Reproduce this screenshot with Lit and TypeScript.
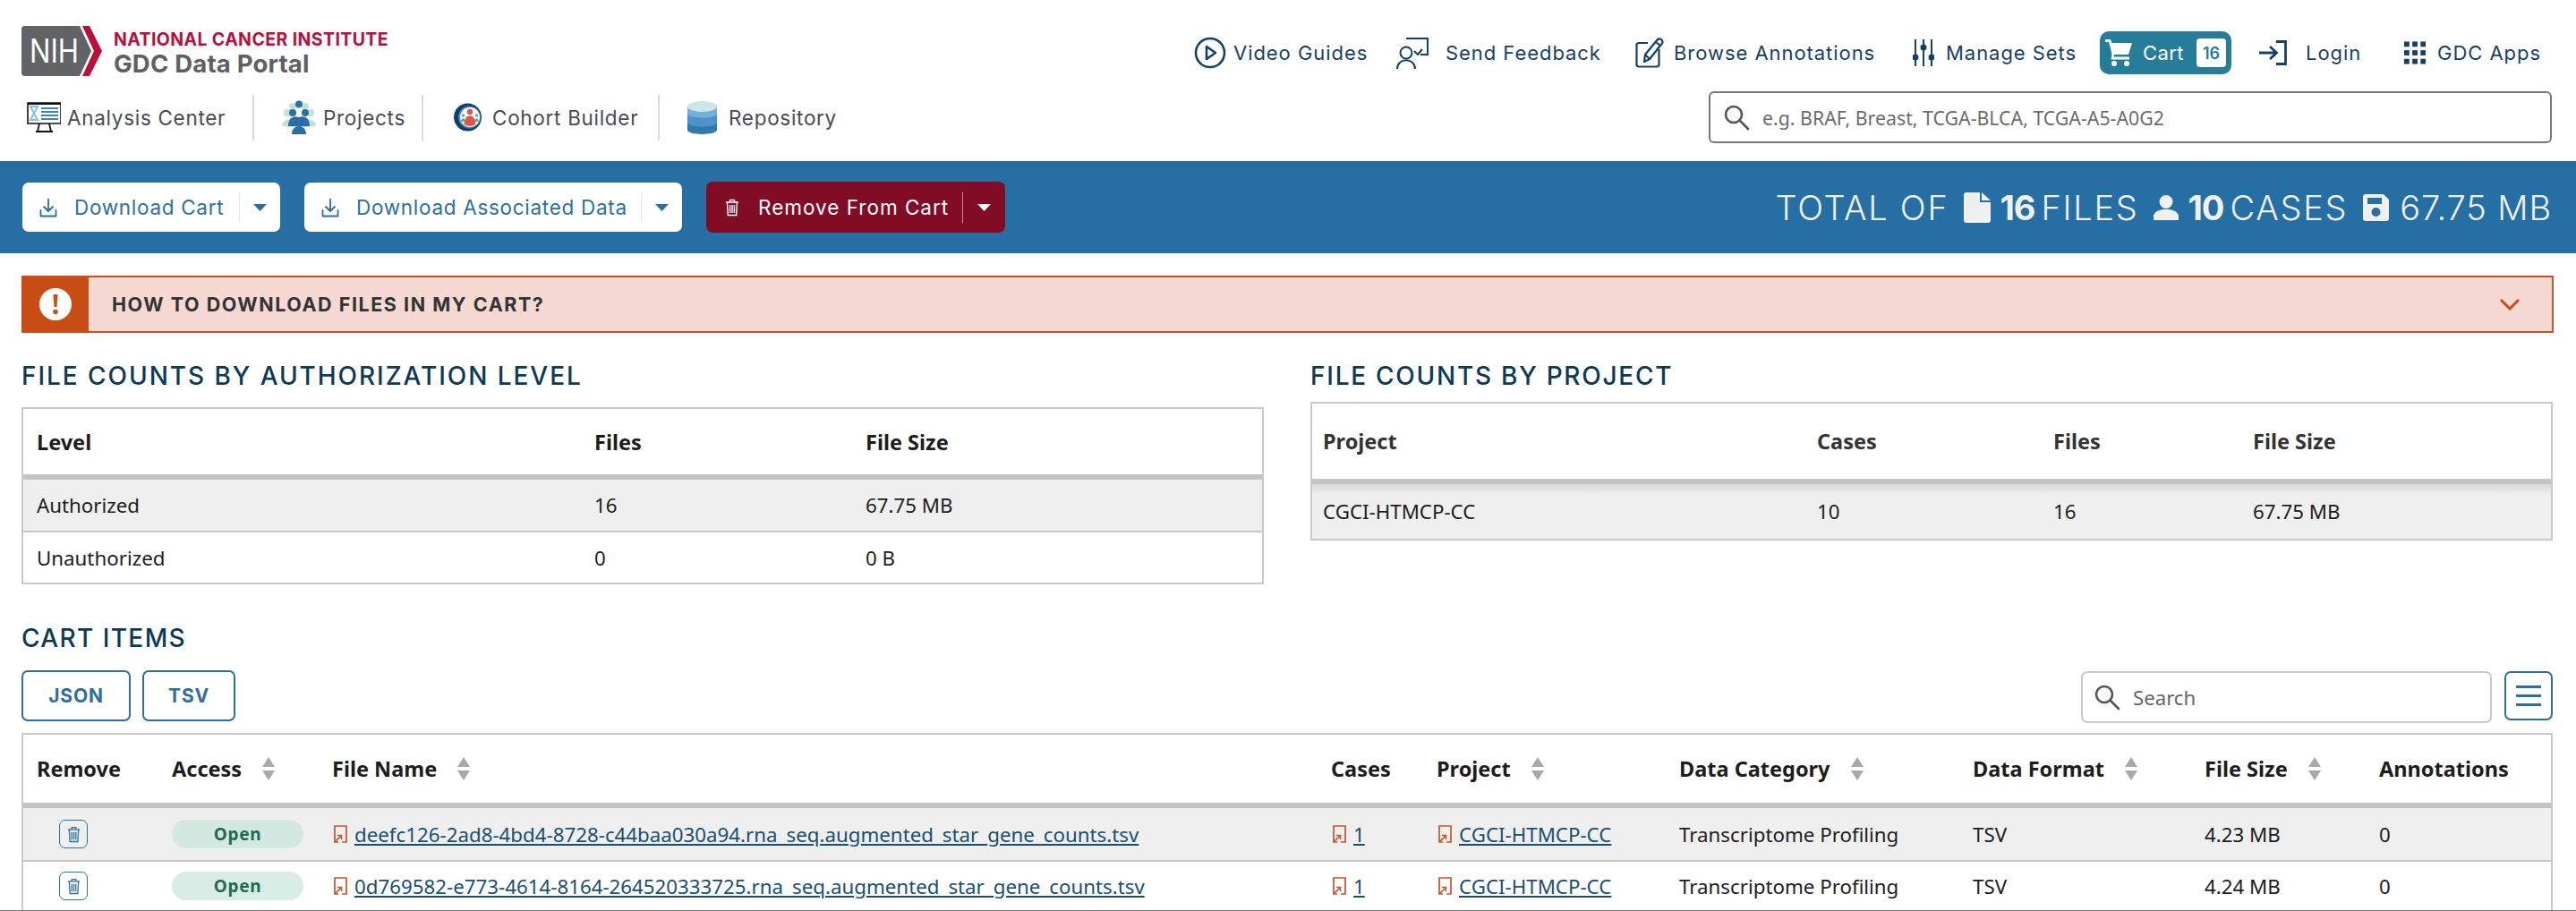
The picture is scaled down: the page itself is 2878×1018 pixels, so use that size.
// app.ts - GDC cart page
import { html, css, svg, LitElement } from 'lit';
import { customElement } from 'lit/decorators.js';

const sortIcon = html`<svg class="sort" viewBox="0 0 16 26" width="16" height="26">
  <path d="M8 0 L15 11 H1 Z M8 26 L1 15 H15 Z" fill="#a9a9a9"></path></svg>`;

const linkIcon = html`<svg class="link-icon" viewBox="0 0 15 20" width="15" height="20" fill="none" stroke="#c9542a" stroke-width="1.7">
  <path d="M5 19 H1 V1 H14 V19 H9"></path><path d="M1 19 L8 12 M4 11.5 H8.5 V16" stroke-width="1.6"></path></svg>`;

const trashIcon = (stroke: string, w = 16, h = 20) => html`<svg viewBox="0 0 16 20" width=${w} height=${h} fill="none" stroke=${stroke} stroke-width="1.4">
  <path d="M1 4 H15 M5.5 4 V1.5 H10.5 V4 M2.5 4 L3.3 18.5 H12.7 L13.5 4 M5.6 7 V16 M8 7 V16 M10.4 7 V16"></path></svg>`;

const downloadIcon = html`<svg viewBox="0 0 20 22" width="20" height="22" fill="none" stroke="#2e6f9f" stroke-width="1.8" stroke-linecap="round" stroke-linejoin="round">
  <path d="M1.5 14 V20.5 H18.5 V14 M10 1.5 V14.5 M5 10 L10 15 L15 10"></path></svg>`;

const caret = (fill: string) => html`<svg viewBox="0 0 15 8" width="15" height="8"><path d="M0 0 H15 L7.5 8 Z" fill=${fill}></path></svg>`;

const searchIcon = html`<svg viewBox="0 0 30 30" width="30" height="30" fill="none" stroke="#555" stroke-width="2.6" stroke-linecap="round">
  <circle cx="12" cy="12" r="9"></circle><path d="M19 19 L28 28"></path></svg>`;

// utility nav icons, all navy outline
const navy = '#164166';
const videoIcon = html`<svg viewBox="0 0 36 36" width="36" height="36" fill="none" stroke=${navy} stroke-width="2.6">
  <circle cx="18" cy="18" r="16"></circle><path d="M14 11 L24 18 L14 25 Z" stroke-linejoin="round"></path></svg>`;
const feedbackIcon = html`<svg viewBox="0 0 36 35" width="36" height="35" fill="none" stroke=${navy} stroke-width="2">
  <circle cx="11" cy="17" r="6.5"></circle><path d="M1 35 C1 22 21 22 21 35 M11 1 H35 V19 H27 M20 15 L24 19 L29 13"></path></svg>`;
const editIcon = html`<svg viewBox="0 0 32 34" width="32" height="34" fill="none" stroke=${navy} stroke-width="2.2" stroke-linejoin="round">
  <path d="M14 6 H4 Q1.500 6 1.500 8.500 V30 Q1.500 32.500 4 32.500 H24 Q26.500 32.500 26.500 30 V13"></path>
  <path d="M10 27 L11 19 L25 2 Q27 0.500 29.500 2.500 Q31.500 5 29.500 7 L16 24 Z M11 19 L16 24 M23 5 L28 9"></path></svg>`;
const setsIcon = html`<svg viewBox="0 0 24 30" width="24" height="30" fill=${navy} stroke=${navy} stroke-width="2">
  <path d="M3 0 V30 M12 0 V30 M21 0 V30"></path><circle cx="3" cy="20" r="2.5"></circle><circle cx="12" cy="9" r="2.500"></circle><circle cx="21" cy="20" r="2.500"></circle></svg>`;
const cartIcon = html`<svg viewBox="0 0 30 30" width="30" height="30" fill="#fff">
  <path d="M0 0 H6 L7.500 4 H30 L26 17 H10 L9.500 19.500 H27 V22.500 H6.500 L7.500 16 L4 3 H0 Z"></path><circle cx="10" cy="27" r="3"></circle><circle cx="24" cy="27" r="3"></circle></svg>`;
const loginIcon = html`<svg viewBox="0 0 32 28" width="32" height="28" fill="none" stroke=${navy} stroke-width="2.8">
  <path d="M19 1.500 H29.500 V26.500 H19 M0 14 H19 M12 7 L19.500 14 L12 21"></path></svg>`;
const appsIcon = html`<svg viewBox="0 0 25 26" width="25" height="26" fill=${navy}>
  ${[0, 9.5, 19].map((x) => [0, 10, 20].map((y) => svg`<rect x=${x} y=${y} width="6" height="6"></rect>`))}</svg>`;

// big nav pictograms
const analysisIcon = html`<svg viewBox="0 0 38 34" width="38" height="34">
  <path d="M1 1 H38 V24 H1 Z" fill="#fff" stroke="#111" stroke-width="1.6"></path><path d="M1 2 H38" stroke="#111" stroke-width="2"></path>
  <path d="M4 5 H12 L4 20 H12 Z M12 5 L4 20" fill="none" stroke="#86c0df" stroke-width="2"></path>
  <path d="M16 7 H35 M16 11 H35 M16 15 H35 M16 19 H35" stroke="#3f83b5" stroke-width="2"></path>
  <path d="M14 24 L12 33 H27 L25 24 M10 33 H29" fill="none" stroke="#111" stroke-width="1.8"></path></svg>`;
const projectsIcon = html`<svg viewBox="0 0 38 38" width="38" height="38">
  <g fill="#bfe3da"><circle cx="6" cy="14" r="4"></circle><circle cx="32" cy="14" r="4"></circle><circle cx="12" cy="7" r="4"></circle><circle cx="26" cy="7" r="4"></circle><path d="M0 28 C0 17 38 17 38 28 C38 31 0 31 0 28 Z"></path></g>
  <g fill="#2b6ea4"><circle cx="19" cy="4.500" r="4"></circle><circle cx="12" cy="14" r="4"></circle><circle cx="26" cy="14" r="4"></circle><path d="M7 29 C7 17 17 17 19 20 C21 17 31 17 31 29 Z"></path><circle cx="19" cy="23" r="4"></circle><path d="M11 38 C11 26 27 26 27 38 Z"></path></g></svg>`;
const cohortIcon = html`<svg viewBox="0 0 31 32" width="31" height="32">
  <circle cx="15.500" cy="16" r="15.500" fill="#123f63"></circle><circle cx="17.500" cy="16" r="12.500" fill="#3f8fc0"></circle><circle cx="18" cy="16" r="11" fill="#fff"></circle>
  <circle cx="10.500" cy="14" r="1.800" fill="#5fb39a"></circle><circle cx="25.500" cy="14" r="1.800" fill="#5fb39a"></circle><path d="M8 21 C8 16 13 16 13 21 Z M23 21 C23 16 28 16 28 21 Z" fill="#5fb39a"></path>
  <circle cx="18" cy="10" r="3.200" fill="#e2574c"></circle><path d="M11.500 24 C11.500 11 24.500 11 24.500 24 Q18 28 11.500 24 Z" fill="#e2574c"></path></svg>`;
const repoIcon = html`<svg viewBox="0 0 33 37" width="33" height="37">
  <path d="M0 5 H33 V32 C33 38.500 0 38.500 0 32 Z" fill="#2f78b0"></path>
  <path d="M0 5 H33 V24 C33 30 0 30 0 24 Z" fill="#4d93c8"></path>
  <path d="M0 5 H33 V14 C33 20 0 20 0 14 Z" fill="#72afdd"></path>
  <ellipse cx="16.500" cy="6" rx="16.500" ry="6" fill="#cfe6e6"></ellipse></svg>`;

const fileIcon = html`<svg viewBox="0 0 30 34" width="30" height="34" fill="#f0f0f0"><path d="M3 0 H18 V11 H30 V31 Q30 34 27 34 H3 Q0 34 0 31 V3 Q0 0 3 0 Z M20 0 L30 9 H20 Z"></path></svg>`;
const personIcon = html`<svg viewBox="0 0 28 28" width="28" height="28" fill="#f0f0f0"><circle cx="14" cy="7.500" r="7.500"></circle><path d="M0 28 V24 C0 13 28 13 28 24 V28 Z"></path></svg>`;
const saveIcon = html`<svg viewBox="0 0 29 30" width="29" height="30"><path fill="#f0f0f0" fill-rule="evenodd" d="M3 0 H23 L29 6 V27 Q29 30 26 30 H3 Q0 30 0 27 V3 Q0 0 3 0 Z M5 4 V11 H21 V4 Z M14.500 15 A5 5 0 1 0 14.500 25 A5 5 0 1 0 14.500 15 Z"></path></svg>`;

const cartRows = [
  ['deefc126-2ad8-4bd4-8728-c44baa030a94.rna_seq.augmented_star_gene_counts.tsv', '4.23 MB'],
  ['0d769582-e773-4614-8164-264520333725.rna_seq.augmented_star_gene_counts.tsv', '4.24 MB'],
];

@customElement('app-root')
export class AppRoot extends LitElement {
  static styles = css`
    :host {
      display: block;
      font-family: "Noto Sans", sans-serif;
      color: #1d1d1d;
    }
    * { box-sizing: border-box; }
    .page {
      display: flex;
      flex-direction: column;
      height: 1018px;
      overflow: hidden;
      background: #fff;
    }

    /* header */
    .top { height: 180px; flex: none; padding: 29px 27px 0 24px; }
    .brand-row { display: flex; justify-content: space-between; height: 56px; padding-right: 12px; }
    .logo { display: flex; gap: 13px; }
    .logo-text { display: flex; flex-direction: column; font-family: Inter, sans-serif; font-weight: 700; }
    .nci { font-size: 19.5px; line-height: 24px; margin-top: 3px; color: #b8103a; letter-spacing: 0.4px; white-space: nowrap; }
    .gdc { font-size: 27.5px; line-height: 31px; color: #5f6062; letter-spacing: 0.2px; white-space: nowrap; }
    .util {
      display: grid;
      grid-template-columns: 226px 267px 310px 209px 178px 162px 153px;
      height: 48px;
      margin-top: 6px;
      font-family: Inter, sans-serif;
      font-size: 22px;
      color: #164166;
    }
    .util-item { display: flex; align-items: center; white-space: nowrap; letter-spacing: 0.95px; }
    .g8 { gap: 8px; } .g11 { gap: 11px; } .g13 { gap: 13px; } .g19 { gap: 19px; } .g20 { gap: 20px; }
    .cart-btn {
      display: flex; align-items: center;
      width: 147px; height: 48px;
      padding: 0 6px;
      background: #267d99;
      border-radius: 10px;
      color: #fff;
      gap: 12px;
      letter-spacing: 0.4px;
    }
    .badge {
      display: flex; align-items: center; justify-content: center;
      width: 33px; height: 32px;
      margin-left: auto;
      background: #fff;
      border-radius: 4px;
      color: #267d99;
      font-size: 18px;
      font-weight: 600;
      letter-spacing: 0;
    }
    .nav-row { display: flex; justify-content: space-between; align-items: center; height: 58px; margin-top: 17px; }
    .nav {
      display: grid;
      grid-template-columns: 254px 189px 264px auto;
      height: 51px;
      margin-left: 6px;
      font-family: Inter, sans-serif;
      font-size: 22.5px;
      color: #484b53;
      letter-spacing: 0.7px;
    }
    .nav-item { display: flex; align-items: center; white-space: nowrap; border-right: 2px solid #d9d9d9; }
    .nav-item:last-child { border-right: 0; }
    .nav-item.a { gap: 7px; }
    .nav-item.b { gap: 8px; padding-left: 31px; }
    .nav-item.c { gap: 12px; padding-left: 34px; }
    .nav-item.d { gap: 13px; padding-left: 31px; }
    .global-search {
      display: flex; align-items: center;
      width: 942px; height: 58px;
      padding-left: 14px;
      gap: 14px;
      border: 2px solid #777;
      border-radius: 6px;
      color: #6c6c6c;
      font-size: 21.3px;
    }

    /* blue band */
    .band {
      flex: none;
      display: flex; align-items: center;
      height: 103px;
      padding: 0 27px 0 25px;
      gap: 27px;
      background: linear-gradient(#2a6a9c, #266fa5 24px);
    }
    .btn {
      display: flex; align-items: center;
      height: 55px;
      padding-left: 19px;
      background: #fff;
      border-radius: 7px;
      font-family: Inter, sans-serif;
      font-size: 22.5px;
      letter-spacing: 0.7px;
      color: #2e6f9f;
      white-space: nowrap;
    }
    .btn .label { margin-left: 19px; }
    .btn .split {
      display: flex; align-items: center; justify-content: center;
      height: 34px;
      margin-left: auto;
      border-left: 1px solid #e6e6e6;
    }
    .btn-cart { width: 288px; }
    .btn-assoc { width: 422px; }
    .btn-cart .split, .btn-assoc .split { width: 46px; }
    .btn-remove { width: 334px; height: 57px; padding-left: 21px; background: #820b26; color: #fff; letter-spacing: 1px; }
    .btn-remove .label { margin-left: 21px; }
    .btn-remove .split { width: 48px; border-left-color: #c9899a; }
    .totals {
      display: flex; align-items: center;
      margin-left: auto;
      font-family: Inter, sans-serif;
      font-size: 38px;
      font-weight: 300;
      letter-spacing: 1.7px;
      color: #f0f0f0;
      white-space: nowrap;
    }
    .totals b { font-weight: 700; margin-left: 10px; margin-right: 7px; letter-spacing: -1px; }
    .totals svg { margin-left: 17px; }
    .totals .size { margin-left: 12px; letter-spacing: 0.9px; }

    /* main */
    main { flex: 1; min-height: 0; overflow: hidden; padding: 25px 26px 0 24px; }
    .alert {
      display: flex; align-items: center;
      height: 64px;
      margin-right: -1px;
      border: 2px solid #c0552a;
      border-left: 0;
      background: #f6d9d3;
    }
    .alert-flag {
      display: flex; align-items: center; justify-content: center;
      align-self: stretch;
      width: 75px;
      margin: -2px 0;
      background: #c84e16;
    }
    .alert-title { margin-left: 26px; font-family: Inter, sans-serif; font-weight: 700; font-size: 21.5px; color: #333; letter-spacing: 1.55px; }
    .alert-chevron { margin-left: auto; margin-right: 36px; }
    h2 {
      margin: 0;
      font-family: Inter, sans-serif;
      font-size: 28px;
      line-height: 34px;
      font-weight: 500;
      letter-spacing: 1.75px;
      color: #0d3a56;
      white-space: nowrap;
    }
    .h-wide { letter-spacing: 1.95px; }
    .summary { display: grid; grid-template-columns: 1388px 1388px; gap: 52px; margin-top: 31px; }
    .mt18 { margin-top: 18px; }
    .mt12 { margin-top: 12px; }
    table {
      width: 100%;
      table-layout: fixed;
      border-collapse: separate;
      border-spacing: 0;
      border: 2px solid #c9c9c9;
      font-size: 22.3px;
    }
    th { padding: 0; text-align: left; font-size: 23.5px; font-weight: 700; border-bottom: 6px solid #c4c4c4; white-space: nowrap; }
    td { padding: 0; white-space: nowrap; }
    .first { padding-left: 15px; }
    tbody tr:nth-child(odd) { background: #efefef; }
    tbody tr + tr td { border-top: 2px solid #c9c9c9; }
    .t-auth thead tr { height: 79px; }
    .t-auth tbody tr:first-child { height: 57px; }
    .t-auth tbody tr:last-child { height: 58px; }
    .t-auth .c1 { width: 638px; } .t-auth .c2 { width: 303px; }
    .t-proj thead tr { height: 90px; }
    .t-proj thead th { color: #333; }
    .t-proj tbody tr { height: 61px; }
    .t-proj tbody td { background: linear-gradient(#d9d9d9, #efefef 12px); }
    .t-proj .c1 { width: 564px; } .t-proj .c2 { width: 264px; } .t-proj .c3 { width: 223px; }
    .t-proj .first { padding-left: 12px; }

    .cart-heading { margin-top: 43px; letter-spacing: 1.4px; }
    .toolbar { display: flex; align-items: flex-start; margin-top: 19px; }
    .tool-btn {
      display: flex; align-items: center; justify-content: center;
      height: 57px;
      border: 2px solid #2e6f9f;
      border-radius: 7px;
      font-family: Inter, sans-serif;
      font-weight: 700;
      font-size: 21px;
      letter-spacing: 0.8px;
      color: #2e6f9f;
    }
    .json { width: 122px; margin-right: 13px; }
    .tsv { width: 104px; }
    .table-search {
      display: flex; align-items: center;
      width: 459px; height: 58px;
      margin: 1px 0 0 auto;
      padding-left: 12px;
      gap: 14px;
      border: 2px solid #c9c9c9;
      border-radius: 7px;
      color: #666;
      font-size: 22.2px;
    }
    .menu-btn {
      display: flex; align-items: center; justify-content: center;
      width: 54px; height: 55px;
      margin: 1px 0 0 14px;
      border: 2px solid #2e6f9f;
      border-radius: 7px;
    }
    .t-cart { margin-top: 11px; border-bottom: 0; }
    .t-cart thead tr { height: 82px; }
    .t-cart tbody tr:first-child { height: 58px; }
    .t-cart tbody tr:last-child { height: 56px; }
    .c-remove { width: 166px; } .c-access { width: 179px; } .c-file { width: 1116px; }
    .c-cases { width: 118px; } .c-project { width: 271px; } .c-cat { width: 328px; }
    .c-format { width: 259px; } .c-size { width: 195px; }
    .th-sort { display: flex; align-items: center; gap: 22px; }
    .trash {
      display: flex; align-items: center; justify-content: center;
      width: 32px; height: 32px;
      margin-left: 40px;
      border: 1.5px solid #2e6f9f;
      border-radius: 7px;
    }
    .pill {
      display: flex; align-items: center; justify-content: center;
      width: 147px; height: 32px;
      border-radius: 16px;
      background: #d3e9e0;
      color: #1f6a55;
      font-size: 19px;
      font-weight: 700;
      letter-spacing: 0.7px;
    }
    tbody tr:last-child .pill { background: #d8ede5; }
    .linked { display: flex; align-items: center; gap: 8px; }
    a { color: #1a4f73; text-decoration: underline; }
    .link-icon { flex: none; margin-left: 2px; }
    .edge { flex: none; height: 1px; background: #777; }
  `;

  render() {
    return html`
      <div class="page">
        <header class="top">
          <div class="brand-row">
            <div class="logo">
              <svg viewBox="0 0 90 56" width="90" height="56">
                <path d="M4 0 H65 L78 28 L65 56 H4 Q0 56 0 52 V4 Q0 0 4 0 Z" fill="#626366"></path>
                <path d="M68 0 H76 L90 28 L76 56 H68 L81 28 Z" fill="#b8103a"></path>
                <text x="9" y="41" font-family="Inter, sans-serif" font-size="37" fill="#fff" textLength="55" lengthAdjust="spacingAndGlyphs">NIH</text>
              </svg>
              <div class="logo-text">
                <span class="nci">NATIONAL CANCER INSTITUTE</span>
                <span class="gdc">GDC Data Portal</span>
              </div>
            </div>
            <nav class="util">
              <div class="util-item g8">${videoIcon}Video Guides</div>
              <div class="util-item g19">${feedbackIcon}Send Feedback</div>
              <div class="util-item g11">${editIcon}Browse Annotations</div>
              <div class="util-item g13">${setsIcon}Manage Sets</div>
              <div class="util-item"><div class="cart-btn">${cartIcon}Cart<span class="badge">16</span></div></div>
              <div class="util-item g20">${loginIcon}Login</div>
              <div class="util-item g13">${appsIcon}GDC Apps</div>
            </nav>
          </div>
          <div class="nav-row">
            <nav class="nav">
              <div class="nav-item a">${analysisIcon}Analysis Center</div>
              <div class="nav-item b">${projectsIcon}Projects</div>
              <div class="nav-item c">${cohortIcon}Cohort Builder</div>
              <div class="nav-item d">${repoIcon}Repository</div>
            </nav>
            <div class="global-search">${searchIcon}<span>e.g. BRAF, Breast, TCGA-BLCA, TCGA-A5-A0G2</span></div>
          </div>
        </header>

        <section class="band">
          <div class="btn btn-cart">${downloadIcon}<span class="label">Download Cart</span><span class="split">${caret('#2e6f9f')}</span></div>
          <div class="btn btn-assoc">${downloadIcon}<span class="label">Download Associated Data</span><span class="split">${caret('#2e6f9f')}</span></div>
          <div class="btn btn-remove">${trashIcon('#fff', 16, 20)}<span class="label">Remove From Cart</span><span class="split">${caret('#fff')}</span></div>
          <div class="totals">
            <span>TOTAL OF</span>${fileIcon}<b>16</b><span>FILES</span>${personIcon}<b>10</b><span>CASES</span>${saveIcon}<span class="size">67.75 MB</span>
          </div>
        </section>

        <main>
          <div class="alert">
            <div class="alert-flag">
              <svg viewBox="0 0 36 36" width="36" height="36"><circle cx="18" cy="18" r="18" fill="#fff"></circle><path d="M15.500 7 H20.500 L19.500 21 H16.500 Z" fill="#c84e16"></path><circle cx="18" cy="26.500" r="2.800" fill="#c84e16"></circle></svg>
            </div>
            <div class="alert-title">HOW TO DOWNLOAD FILES IN MY CART?</div>
            <svg class="alert-chevron" viewBox="0 0 22 13" width="22" height="13" fill="none" stroke="#c84e16" stroke-width="3"><path d="M1 1 L11 11 L21 1"></path></svg>
          </div>

          <div class="summary">
            <div>
              <h2 class="h-wide">FILE COUNTS BY AUTHORIZATION LEVEL</h2>
              <table class="t-auth mt18">
                <colgroup><col class="c1" /><col class="c2" /><col /></colgroup>
                <thead><tr><th class="first">Level</th><th>Files</th><th>File Size</th></tr></thead>
                <tbody>
                  <tr><td class="first">Authorized</td><td>16</td><td>67.75 MB</td></tr>
                  <tr><td class="first">Unauthorized</td><td>0</td><td>0 B</td></tr>
                </tbody>
              </table>
            </div>
            <div>
              <h2>FILE COUNTS BY PROJECT</h2>
              <table class="t-proj mt12">
                <colgroup><col class="c1" /><col class="c2" /><col class="c3" /><col /></colgroup>
                <thead><tr><th class="first">Project</th><th>Cases</th><th>Files</th><th>File Size</th></tr></thead>
                <tbody><tr><td class="first">CGCI-HTMCP-CC</td><td>10</td><td>16</td><td>67.75 MB</td></tr></tbody>
              </table>
            </div>
          </div>

          <h2 class="cart-heading">CART ITEMS</h2>
          <div class="toolbar">
            <div class="tool-btn json">JSON</div>
            <div class="tool-btn tsv">TSV</div>
            <div class="table-search">${searchIcon}<span>Search</span></div>
            <div class="menu-btn">
              <svg viewBox="0 0 28 23" width="28" height="23" fill="#2e6f9f"><rect width="28" height="3"></rect><rect y="10" width="28" height="3"></rect><rect y="20" width="28" height="3"></rect></svg>
            </div>
          </div>
          <table class="t-cart">
            <colgroup>
              <col class="c-remove" /><col class="c-access" /><col class="c-file" /><col class="c-cases" /><col class="c-project" />
              <col class="c-cat" /><col class="c-format" /><col class="c-size" /><col />
            </colgroup>
            <thead>
              <tr>
                <th class="first">Remove</th>
                <th><div class="th-sort">Access ${sortIcon}</div></th>
                <th><div class="th-sort">File Name ${sortIcon}</div></th>
                <th>Cases</th>
                <th><div class="th-sort">Project ${sortIcon}</div></th>
                <th><div class="th-sort">Data Category ${sortIcon}</div></th>
                <th><div class="th-sort">Data Format ${sortIcon}</div></th>
                <th><div class="th-sort">File Size ${sortIcon}</div></th>
                <th>Annotations</th>
              </tr>
            </thead>
            <tbody>
              ${cartRows.map(
                ([name, size]) => html`
                  <tr>
                    <td><div class="trash">${trashIcon('#2e6f9f', 15, 19)}</div></td>
                    <td><div class="pill">Open</div></td>
                    <td><div class="linked">${linkIcon}<a>${name}</a></div></td>
                    <td><div class="linked">${linkIcon}<a>1</a></div></td>
                    <td><div class="linked">${linkIcon}<a>CGCI-HTMCP-CC</a></div></td>
                    <td>Transcriptome Profiling</td>
                    <td>TSV</td>
                    <td>${size}</td>
                    <td>0</td>
                  </tr>
                `
              )}
            </tbody>
          </table>
        </main>
        <div class="edge"></div>
      </div>
    `;
  }
}
